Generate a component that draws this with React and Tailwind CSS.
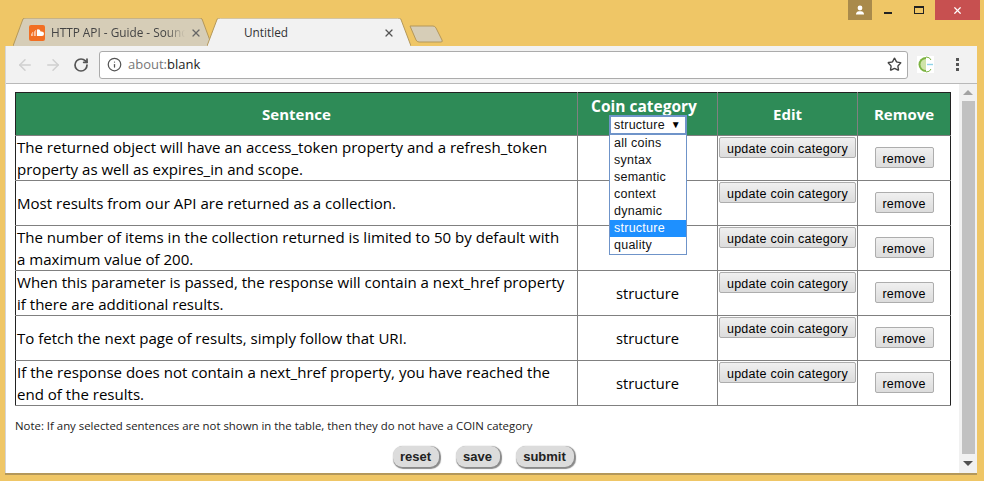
import React from 'react';
import { ArrowLeft, ArrowRight, RotateCw, Info, Star, X } from 'lucide-react';

const rows = [
  { text: 'The returned object will have an access_token property and a refresh_token property as well as expires_in and scope.', category: '' },
  { text: 'Most results from our API are returned as a collection.', category: '' },
  { text: 'The number of items in the collection returned is limited to 50 by default with a maximum value of 200.', category: '' },
  { text: 'When this parameter is passed, the response will contain a next_href property if there are additional results.', category: 'structure' },
  { text: 'To fetch the next page of results, simply follow that URI.', category: 'structure' },
  { text: 'If the response does not contain a next_href property, you have reached the end of the results.', category: 'structure' }
];

const options = ['all coins', 'syntax', 'semantic', 'context', 'dynamic', 'structure', 'quality'];

const TabShape = ({ fill }) => (
  <svg className="absolute inset-0 w-full h-full" viewBox="0 0 200 29" preserveAspectRatio="none">
    <path d="M0 28 L10 1 Q11 0 13 0 L187 0 Q189 0 190 1 L200 28" fill={fill} stroke="#b4985a" strokeWidth="1" vectorEffect="non-scaling-stroke" />
  </svg>
);

const GrayButton = ({ children, className }) => (
  <button className={`block mx-auto h-[21px] pb-[2px] border border-[#adadad] rounded-[2px] bg-gradient-to-b from-[#f0f0f0] to-[#dcdcdc] text-[12.5px] text-black font-['Liberation_Sans',sans-serif] tracking-[0.25px] ${className}`}>
    {children}
  </button>
);

const FormButton = ({ children, className }) => (
  <button className={`h-[21px] rounded-[9px] bg-[#dcdcdc] text-[13px] font-bold text-[#222] font-['Liberation_Sans',sans-serif] shadow-[1px_1px_1px_1px_#8a8a8a] ${className}`}>
    {children}
  </button>
);

const App = () => {
  return (
    <div className="w-[984px] h-[481px] bg-[#efc666] flex flex-col overflow-hidden font-['Open_Sans',sans-serif]">
      {/* Title bar */}
      <div className="h-[18px] flex justify-end pr-[4px] shrink-0">
        <div className="w-[24px] h-[20px] bg-[#a98a4b] flex items-center justify-center">
          <svg width="10" height="10" viewBox="0 0 10 10" fill="#fff">
            <circle cx="5" cy="3" r="2.4" />
            <path d="M1 9.5 Q1 6.6 4 6.2 L6 6.2 Q9 6.6 9 9.5 Z" />
          </svg>
        </div>
        <div className="w-[31px] h-[20px] flex items-center justify-center pt-[5px]">
          <div className="w-[8px] h-[2px] bg-[#222]" />
        </div>
        <div className="w-[32px] h-[20px] flex items-center justify-center">
          <div className="w-[10px] h-[8px] border border-[#222] border-t-2" />
        </div>
        <div className="w-[45px] h-[20px] bg-[#c75050] flex items-center justify-center">
          <X size={11} strokeWidth={2.6} color="#fff" />
        </div>
      </div>

      {/* Tabs */}
      <div className="h-[29px] flex items-start pl-[13px] shrink-0 text-[11.8px] relative z-10 -mb-px">
        <div className="relative w-[199px] h-[29px] text-[#555]">
          <TabShape fill="#d6cdb7" />
          <div className="relative flex items-center h-full pl-[16px] pr-[10px]">
            <div className="w-[16px] h-[16px] rounded-[2px] bg-[#f26f23] flex items-center justify-center shrink-0">
              <svg width="13" height="7" viewBox="0 0 13 7" fill="#fff">
                <path d="M0 4.5h.6V7H0zM1.5 3h.6v4h-.6zM3 2.2h.6V7H3zM4.5 1h.6v6h-.6zM6 .4 Q9 -.4 9.6 2.6 Q13 2.2 13 4.8 Q13 7 11 7 H6z" />
              </svg>
            </div>
            <span className="ml-[6px] w-[134px] overflow-hidden whitespace-nowrap text-[#444] [mask-image:linear-gradient(to_right,black_86%,transparent)]">HTTP API - Guide - SoundCloud</span>
            <X size={12} strokeWidth={2.4} color="#666" className="ml-auto shrink-0" />
          </div>
        </div>
        <div className="relative w-[204px] h-[29px] -ml-[5px] text-[#333]">
          <TabShape fill="#f2f2f2" />
          <div className="relative flex items-center h-full pl-[37px] pr-[16px]">
            <span>Untitled</span>
            <X size={12} strokeWidth={2.4} color="#555" className="ml-auto" />
          </div>
        </div>
        <svg className="mt-[7px] -ml-[2px]" width="35" height="18" viewBox="0 0 35 18">
          <path d="M1 1 H24 Q26 1 27 3 L33 15 Q34 17 32 17 H10 Q8 17 7 15 Z" fill="#d6cdb7" stroke="#b4985a" />
        </svg>
      </div>

      {/* Browser window */}
      <div className="ml-[5px] w-[972px] h-[427px] bg-white border-l border-[#d5d5d5] shadow-[0_2px_0_#b4985a] flex flex-col shrink-0">
        {/* Toolbar */}
        <div className="h-[38px] bg-[#f2f2f2] border-b border-[#b9b9b9] flex items-center pl-[10px] pr-[6px] shrink-0">
          <ArrowLeft size={18} color="#d0d0d0" strokeWidth={2} />
          <ArrowRight size={18} color="#d0d0d0" strokeWidth={2} className="ml-[10px]" />
          <RotateCw size={16} color="#555" strokeWidth={2.6} className="ml-[11px]" />
          <div className="ml-[10px] w-[809px] h-[28px] bg-white border border-[#ababab] rounded-[3px] flex items-center pl-[7px] pr-[5px] text-[13px]">
            <Info size={15} color="#555" strokeWidth={2} />
            <span className="ml-[6px] text-[#777]">about:</span>
            <span className="text-[#222]">blank</span>
            <Star size={15} color="#444" strokeWidth={2.2} className="ml-auto" />
          </div>
          <div className="ml-[9px] w-[17px] h-[17px] bg-white flex items-center">
            <svg width="17" height="17" viewBox="0 0 17 17">
              <path d="M9 1 A7.5 7.5 0 1 0 9 16 Z" fill="#7cb342" />
              <path d="M9 3 A5.5 5.5 0 0 0 9 14 Z" fill="#cfe3a8" />
              <path d="M9 1 Q13 1 14 4 M9 16 Q13 16 14 13" stroke="#7cb342" strokeWidth="1" fill="none" />
              <path d="M10 8.5 H16" stroke="#8fd3e8" strokeWidth="1.4" />
            </svg>
          </div>
          <div className="ml-auto mr-[12px] flex flex-col gap-[2px]">
            <div className="w-[3px] h-[3px] bg-[#555]" />
            <div className="w-[3px] h-[3px] bg-[#555]" />
            <div className="w-[3px] h-[3px] bg-[#555]" />
          </div>
        </div>

        <div className="flex flex-1 min-h-0">
          {/* Page */}
          <div className="w-[953px] pl-[9px] pt-[8px] shrink-0">
            <div className="relative w-[936px]">
              <table className="w-[936px] table-fixed border-collapse border border-[#222] text-[15.05px] leading-[22px] text-black">
                <thead>
                  <tr className="h-[43px] bg-[#2e8b57] text-white text-[15px] font-bold">
                    <th className="w-[562px] border border-[#808080] border-l-[#222] border-t-[#222]">Sentence</th>
                    <th className="w-[140px] border border-[#808080] border-t-[#222] align-top pt-[3px] pr-[7px] leading-[20px] text-[15.5px] whitespace-nowrap">Coin category</th>
                    <th className="w-[140px] border border-[#808080] border-t-[#222]">Edit</th>
                    <th className="border border-[#808080] border-t-[#222] border-r-[#222]">Remove</th>
                  </tr>
                </thead>
                <tbody>
                  {rows.map((row, index) => (
                    <tr key={index} className="h-[45px]">
                      <td className="border border-[#808080] border-l-[#222] pl-[1px] pr-[7px] align-middle">{row.text}</td>
                      <td className="border border-[#808080] text-center align-middle text-[14.7px]">{row.category}</td>
                      <td className="border border-[#808080] text-center align-top pt-[1px]">
                        <GrayButton className="w-[137px]">update coin category</GrayButton>
                      </td>
                      <td className="border border-[#808080] border-r-[#222] text-center align-middle">
                        <GrayButton className="w-[59px] mb-[2px]">remove</GrayButton>
                      </td>
                    </tr>
                  ))}
                </tbody>
              </table>

              {/* Open dropdown over the table */}
              <div className="absolute left-[594px] top-[23px] w-[78px] font-['Liberation_Sans',sans-serif] text-[12.5px] tracking-[0.25px] text-[#111] z-10">
                <div className="h-[20px] bg-white border-2 border-[#6f94c9] flex items-center pl-[3px] pr-[4px]">
                  <span>structure</span>
                  <span className="ml-auto text-[10px] leading-none text-black">▼</span>
                </div>
                <div className="bg-white border border-[#6f94c9] border-t-0">
                  {options.map((option) => (
                    <div
                      key={option}
                      className={option === 'structure' ? 'h-[17px] leading-[17px] pl-[4px] bg-[#1e90ff] text-white' : 'h-[17px] leading-[17px] pl-[4px]'}
                    >
                      {option}
                    </div>
                  ))}
                </div>
              </div>
            </div>

            <p className="mt-[12px] text-[11.4px] leading-[16px] text-[#222]">
              Note: If any selected sentences are not shown in the table, then they do not have a COIN category
            </p>
            <div className="mt-[12px] w-[936px] flex justify-center gap-[16px]">
              <FormButton className="w-[46px]">reset</FormButton>
              <FormButton className="w-[44px] ml-[1px]">save</FormButton>
              <FormButton className="w-[58px]">submit</FormButton>
            </div>
          </div>

          {/* Scrollbar */}
          <div className="w-[18px] bg-[#f1f1f1] flex flex-col items-center shrink-0">
            <div className="h-[17px] flex items-center justify-center">
              <div className="w-0 h-0 border-x-[5px] border-x-transparent border-b-[5px] border-b-[#a3a3a3]" />
            </div>
            <div className="w-[13px] flex-1 bg-[#c1c1c1]" />
            <div className="h-[19px] flex items-center justify-center">
              <div className="w-0 h-0 border-x-[5px] border-x-transparent border-t-[5px] border-t-[#505050]" />
            </div>
          </div>
        </div>
      </div>
    </div>
  );
};

export default App;
